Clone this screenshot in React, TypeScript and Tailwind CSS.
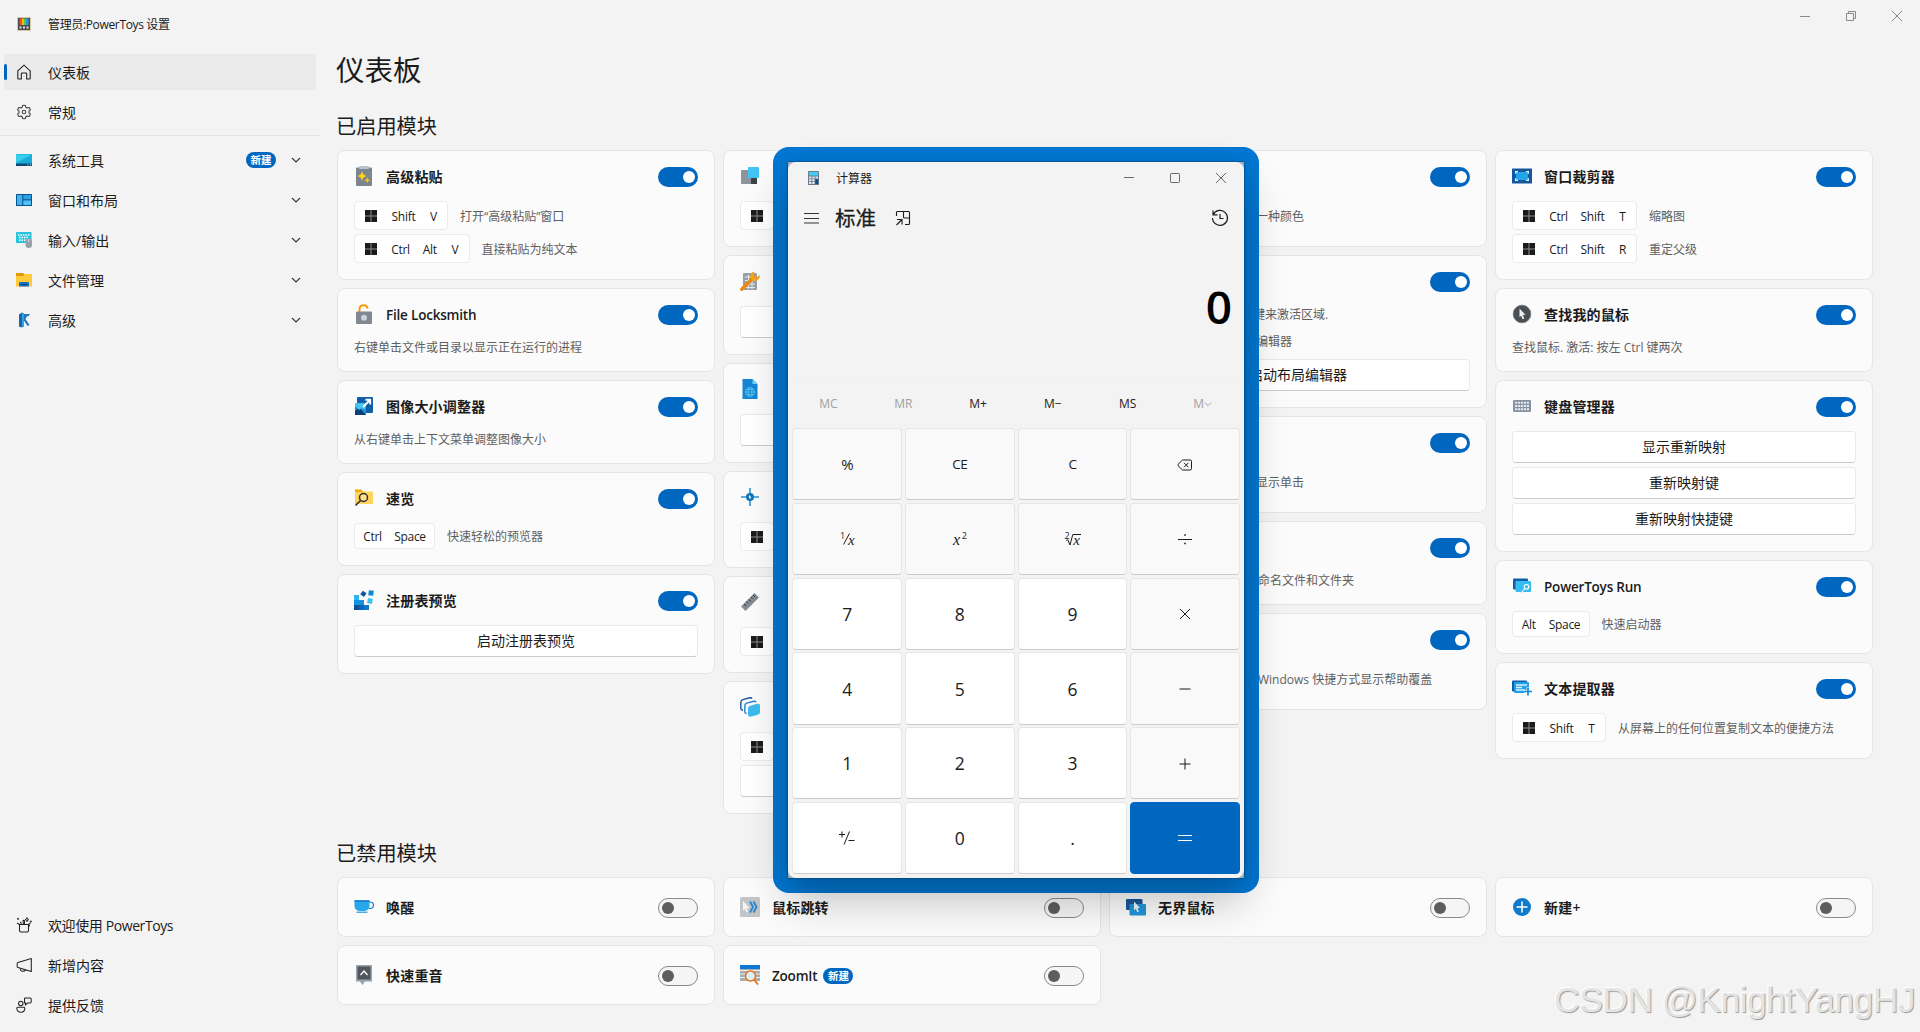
import React, { useState } from "react";

interface Shortcut {
  keys: string[];
  text?: string;
}

interface Module {
  id: string;
  title?: string;
  badge?: string;
  shortcuts?: Shortcut[];
  lines?: string[];
  lineClass?: string;
  buttons?: string[];
}

/* ---------- Module icons (20 x 20) ---------- */

const moduleIcons: Record<string, React.ReactNode> = {
  paste: (
    <>
      <rect x="2" y="1.5" width="16" height="18.5" rx="1" fill="#7d868e" />
      <rect x="5" y="0" width="10" height="3" rx="1" fill="#b9c4cf" />
      <path d="M8 5.5l1.4 3.1 3.1 1.4-3.1 1.4L8 14.5l-1.4-3.1L3.5 10l3.1-1.4z" fill="#ffd60a" />
      <path d="M13.3 11.5l.9 1.9 1.9.9-1.9.9-.9 1.9-.9-1.9-1.9-.9 1.9-.9z" fill="#ffc800" />
    </>
  ),
  lock: (
    <>
      <path d="M5.5 8V5.2C5.5 2.8 7 1.2 9.6 1.2c2.2 0 3.6 1.1 4 3.3" fill="none" stroke="#f79a0e" strokeWidth="2" />
      <rect x="2" y="7.5" width="16" height="12.5" rx="1" fill="#7f8890" />
      <circle cx="10" cy="13.8" r="3" fill="#c9d3de" />
    </>
  ),
  resize: (
    <>
      <rect x="3" y="1" width="16" height="16" rx="1" fill="#0f5ea8" />
      <rect x="1" y="8" width="11" height="11" rx="1" fill="#1f93dc" />
      <path d="M1 15l4-4 7 8H1z" fill="#0b3f78" />
      <path d="M1 10l4 4 3-2 2 2 2-3V9l-2-2H1z" fill="#45c4f0" />
      <path d="M9 11l7-7M11.500 3.800h4.700v4.700" fill="none" stroke="#fff" strokeWidth="1.9" />
    </>
  ),
  peek: (
    <>
      <path d="M1 2h6l1.500 1.500H18a1 1 0 011 1V16H1z" fill="#ffd35c" />
      <path d="M1 1.500h6.500L9 4H1z" fill="#f5a800" />
      <circle cx="9.500" cy="9.500" r="4" fill="#ffe08a" stroke="#2e2e2e" strokeWidth="1.500" />
      <path d="M6.800 12.200L1.500 17.500" stroke="#2e2e2e" strokeWidth="1.600" />
    </>
  ),
  registry: (
    <>
      <rect x="0" y="5" width="5" height="5" fill="#2bb5ee" />
      <rect x="0" y="10" width="5" height="5" fill="#1593dd" />
      <rect x="5" y="10" width="5" height="5" fill="#1c8edb" />
      <rect x="0" y="15" width="5" height="5" fill="#0f4f93" />
      <rect x="5" y="15" width="5" height="5" fill="#0a66b8" />
      <rect x="10" y="15" width="5" height="5" fill="#0f78cf" />
      <rect x="7.200" y="1.500" width="4.500" height="4.500" fill="#12549b" transform="rotate(35 9.400 3.700)" />
      <rect x="14.500" y="0.500" width="5" height="5" fill="#1488d6" transform="rotate(8 17 3)" />
      <rect x="13.500" y="8.500" width="5" height="5" fill="#3cc3f2" transform="rotate(12 16 11)" />
    </>
  ),
  top: (
    <>
      <rect x="1" y="4" width="16" height="14" rx="1" fill="#8c959d" />
      <rect x="11" y="12" width="6" height="6" fill="#3d4246" />
      <rect x="8" y="1" width="11" height="11" rx="1" fill="#41c4f3" />
    </>
  ),
  wrench: (
    <>
      <rect x="3" y="2" width="14" height="17" rx="1" fill="#98a1a9" />
      <path d="M5 6h10M5 9.500h10M5 13h10M5 16.500h10M8.500 4v14M12 4v14" stroke="#e6ebef" strokeWidth="1" />
      <path d="M1.800 18.200L14 6" stroke="#ee8a12" strokeWidth="3.400" strokeLinecap="round" />
      <path d="M14.500 .5a4.800 4.800 0 00-3.900 6.600l2.300 2.300A4.800 4.800 0 0019.700 4l-3 2.600-2.300-.7-.6-2.300z" fill="#f9a01b" />
    </>
  ),
  hosts: (
    <>
      <path d="M2.500 0h10l5 5v15h-15z" fill="#1585d4" />
      <path d="M12.500 0l5 5h-5z" fill="#6fd3f7" />
      <g fill="none" stroke="#4fc0f0" strokeWidth="1">
        <circle cx="10" cy="13" r="4.500" />
        <ellipse cx="10" cy="13" rx="2" ry="4.500" />
        <path d="M5.500 13h9M6.300 10.500h7.400M6.300 15.500h7.400" />
      </g>
    </>
  ),
  crosshair: (
    <>
      <path d="M10 1v5M10 14v5M1 10h5M14 10h5" stroke="#2a93d6" strokeWidth="1.600" />
      <circle cx="10" cy="10" r="4" fill="#1374bd" />
      <path d="M9 8l2.500 2.500-1.200.2.300 1.400-1.600-1z" fill="#fff" />
    </>
  ),
  ruler: (
    <>
      <path d="M14.500 1l4.500 4.500L5.500 19 1 14.500z" fill="#838c95" />
      <path d="M4 12l2 2M6.300 9.700l1.500 1.500M8.600 7.400l2 2M10.900 5.100l1.500 1.500M13 3l2 2" stroke="#2f3337" strokeWidth="1" />
    </>
  ),
  workspaces: (
    <>
      <path d="M3 13H2.500A1.800 1.800 0 01.8 11.200V5.500C.8 4 1.500 3 2.800 2.600l7-1.800c1-.2 1.800.1 2.200 1" fill="none" stroke="#15539a" strokeWidth="1.400" />
      <path d="M6.500 16.500A1.800 1.800 0 014.800 14.700V9c0-1.500.7-2.500 2-2.900l7-1.800c1-.2 1.800.1 2.200 1" fill="none" stroke="#1c83cf" strokeWidth="1.400" />
      <path d="M8 12c0-2 .6-2.800 2.300-3.300l7-1.900c1.700-.4 2.700.3 2.700 1.900v6c0 1.700-.6 2.500-2.200 3l-6.500 1.900C9.300 20.100 8 19.300 8 17.500z" fill="#3dbbee" />
    </>
  ),
  crop: (
    <>
      <rect x="0" y="2.500" width="20" height="15" rx=".6" fill="#14589f" />
      <rect x="4" y="6" width="12" height="8" fill="#20a6e8" />
      <path d="M3.600 7.800V5.600H6M14 5.600h2.400v2.200M16.400 12.200v2.200H14M6 14.400H3.600v-2.200" fill="none" stroke="#d8f2ff" strokeWidth="1.200" />
    </>
  ),
  findMouse: (
    <>
      <circle cx="10" cy="10" r="8.800" fill="#4a4f54" stroke="#777d83" strokeWidth="1" />
      <path d="M7.500 4.500l6 6.300-2.700.2 1.500 3.400-1.700.8-1.500-3.500-1.600 1.600z" fill="#e9edf0" />
    </>
  ),
  keyboard: (
    <>
      <rect x="1" y="4" width="18" height="12" rx="1" fill="#8793a1" />
      <path d="M3 6.800h14M3 10h14M3 13.200h14" stroke="#e3e8ee" strokeWidth="2" strokeDasharray="2.200 .8" />
    </>
  ),
  run: (
    <>
      <rect x="1" y="2.500" width="15" height="11" rx="1" fill="#0d5fae" />
      <rect x="3.500" y="5" width="15.500" height="11" rx="1" fill="#35bdf0" />
      <circle cx="14.500" cy="10.800" r="2.300" fill="#35bdf0" stroke="#fff" strokeWidth="1.200" />
      <path d="M12.800 12.500L9 17" stroke="#d2e4ee" strokeWidth="1.200" />
    </>
  ),
  ocr: (
    <>
      <rect x="0" y="2.500" width="15" height="11" rx="1" fill="#0d5fae" />
      <rect x="2" y="4" width="15" height="11" rx="1" fill="#22a0e6" />
      <path d="M4 7h11M4 9.500h6M4 12h9" stroke="#d9f2ff" strokeWidth="1.300" />
      <path d="M16 9.500v8M12.200 13.500H20" stroke="#fbfbfb" strokeWidth="3" />
      <path d="M16 10v7.500M12.200 13.500H20" stroke="#1289db" strokeWidth="1.700" />
    </>
  ),
  awake: (
    <>
      <path d="M15 5h1.200a2.200 2.200 0 010 6.500H14.500" fill="none" stroke="#1878c5" strokeWidth="1.200" />
      <path d="M.5 3.500h15v5.500a5 5 0 01-5 5h-5a5 5 0 01-5-5z" fill="#27a8ea" />
      <path d="M.5 4h15" stroke="#0f6fc0" strokeWidth="1.400" />
      <path d="M2.500 15.200h11" stroke="#2395dc" strokeWidth="1.200" />
    </>
  ),
  jump: (
    <>
      <rect x="0" y="0" width="20" height="20" rx="1.500" fill="#c3c4c6" />
      <path d="M3 4l6.500 7-3 .2 1.500 3.600-1.600.7-1.500-3.600L3 13.500z" fill="#f4f5f6" />
      <path d="M10 4.500l3 5.500-3 5.500M13.500 4.500l3 5.500-3 5.500" fill="none" stroke="#2a88cc" strokeWidth="1.900" />
    </>
  ),
  borders: (
    <>
      <rect x="0" y="2" width="16.500" height="11" rx="1" fill="#1a5796" />
      <rect x="3.500" y="7" width="16.500" height="11.500" rx="1" fill="#2196d8" />
      <path d="M8 4.500l6 6.500-2.700.2 1.600 3.300-1.600.7-1.500-3.400L8 13.500z" fill="#eaf5fb" />
    </>
  ),
  newPlus: (
    <>
      <circle cx="10" cy="10" r="9" fill="#0f7acb" />
      <path d="M10 4.500v11M4.500 10h11" stroke="#fff" strokeWidth="1.500" />
    </>
  ),
  accent: (
    <>
      <path d="M2 0h16v16.500h-7L8.500 20 6 16.500H2z" fill="#98a3ae" />
      <rect x="3.500" y="1.500" width="13" height="13" fill="#50565c" />
      <path d="M6.500 10L10 6l3.500 4" fill="none" stroke="#fff" strokeWidth="1.300" />
    </>
  ),
  zoomit: (
    <>
      <rect x="0" y="0" width="20" height="16" fill="#a9adb1" />
      <rect x="0" y="0" width="20" height="4" fill="#0a78d4" />
      <path d="M0 5.500h20M0 9h20M0 12.500h20" stroke="#eceef0" strokeWidth="1.200" />
      <circle cx="10.500" cy="11" r="5" fill="#d8f2fb" stroke="#e8741a" strokeWidth="1.500" />
      <path d="M14 14.500l4 5" stroke="#e8741a" strokeWidth="1.900" />
    </>
  ),
};

/* ---------- Sidebar icons (16 x 16) ---------- */

const navIcons: Record<string, React.ReactNode> = {
  home: <path d="M1.800 6.900L8 1.200l6.200 5.700v7.300a.8.8 0 01-.8.800h-2.700V9.800A.8.800 0 009.900 9H6.100a.8.800 0 00-.8.800V15H2.600a.8.800 0 01-.8-.8z" fill="none" stroke="#1b1b1b" strokeWidth="1.050" />,
  settings: (
    <g fill="none" stroke="#3c3c3c" strokeWidth="1.050" strokeLinejoin="round">
      <path d="M6.600 1.400a7 7 0 012.800 0l.4 1.900 1.300.75 1.900-.6a7 7 0 011.400 2.400L13 7.200v1.600l1.400 1.350a7 7 0 01-1.400 2.400l-1.900-.6-1.300.75-.4 1.900a7 7 0 01-2.800 0l-.4-1.900-1.300-.75-1.900.6a7 7 0 01-1.400-2.400L3 8.800V7.200L1.600 5.850A7 7 0 013 3.450l1.900.6 1.300-.75z" />
      <circle cx="8" cy="8" r="1.800" />
    </g>
  ),
  system: (
    <>
      <rect y="2" width="16" height="12" rx=".5" fill="#1cabd8" />
      <path d="M0 2.500h16L0 11z" fill="#35cdea" />
      <rect y="11.500" width="16" height="2.500" fill="#0c4a75" />
      <path d="M11.500 12.800h1M14 12.800h1" stroke="#bfe6f5" strokeWidth="1" />
    </>
  ),
  windows: (
    <>
      <rect y="2" width="16" height="12" rx=".5" fill="#0e4f8f" />
      <rect x="1" y="3" width="5.300" height="10" fill="#3bb4ee" />
      <rect x="7.300" y="3" width="7.700" height="4.300" fill="#2c9fe6" />
      <rect x="7.300" y="8.400" width="7.700" height="4.600" fill="#4ec2f5" />
    </>
  ),
  input: (
    <>
      <rect y="0" width="15.500" height="11" rx=".6" fill="#2bc4de" />
      <path d="M2 3h11.500M3 5.500h10M3 8.300h8" stroke="#fff" strokeWidth="1.400" strokeDasharray="1.500 1" />
      <rect x="9.500" y="6.500" width="6.500" height="9.500" rx="3.200" fill="#98a1ab" />
      <path d="M12.700 7v3" stroke="#dfe4e9" strokeWidth=".9" />
    </>
  ),
  files: (
    <>
      <path d="M0 2h16v12.500H0z" fill="#ffcb3d" />
      <path d="M0 1h7l1.500 1.500L7 4H0z" fill="#e29a00" />
      <path d="M3 14.500v-3.200c0-.8.500-1.300 1.300-1.300h7.400c.8 0 1.300.5 1.300 1.300v3.200z" fill="#1370c4" />
      <path d="M5 12.500h6" stroke="#0a3d78" strokeWidth="1.100" />
    </>
  ),
  advanced: (
    <>
      <path d="M3 2.500L6 .5l2 1v13L5.500 15.500 3 14.500z" fill="#1568b0" />
      <path d="M6 1l2 .5v13l-2 .8z" fill="#38a1e2" />
      <path d="M8 2h6l-1.500 2.200H11L9.500 7l4 6-1.800 1L8 8.800z" fill="#2079c4" />
    </>
  ),
  welcome: (
    <g fill="none" stroke="#222" strokeWidth="1.050">
      <path d="M3.500 7.500h9v6a1.500 1.500 0 01-1.500 1.500H5a1.500 1.500 0 01-1.500-1.500z" />
      <path d="M3.500 7.500L1 6M5.500 7.500L4.500 4.800M7.500 7.500L7 4c0-1 1.500-1 1.500 0v3.500M12.500 7.500l2-1.500" />
      <path d="M11 .500l.5 1.600 1.500.5-1.500.6L11 4.800l-.5-1.600L9 2.600l1.500-.5zM2 .8v2M1 1.800h2M14.800 3.500v2M13.800 4.500h2M13.500 8v1.500" strokeWidth=".9" />
    </g>
  ),
  news: (
    <path d="M15.300 1.500v13L2 10.500a1 1 0 01-.8-1V6.500a1 1 0 01.8-1zM4 11.200c.2 2 1.300 3 2.800 3s2.500-.7 2.800-1.500" fill="none" stroke="#222" strokeWidth="1.050" strokeLinejoin="round" />
  ),
  feedback: (
    <g fill="none" stroke="#222" strokeWidth="1.050">
      <circle cx="4.800" cy="6.500" r="2.200" />
      <path d="M.8 11.200c0-.6.400-1 1-1h6c.6 0 1 .4 1 1 0 2.500-1.500 4-4 4s-4-1.500-4-4z" />
      <path d="M8.500 1h5.500a1.200 1.200 0 011.200 1.200v2.600A1.200 1.200 0 0114 6h-2.500L9.500 7.800V6H8.500V1" />
    </g>
  ),
};

const Chevron = () => (
  <svg width="10" height="10" viewBox="0 0 10 10" className="shrink-0">
    <path d="M1 3l4 4 4-4" fill="none" stroke="#333" strokeWidth="1.100" />
  </svg>
);

const NewBadge = ({ text }: { text: string }) => (
  <span className="flex h-4 w-[30px] items-center justify-center rounded-full bg-[#0067c0] pt-px text-[10.5px] leading-none font-semibold text-white">
    {text}
  </span>
);

const hasLatin = (text = "") => /[A-Za-z]/.test(text);

function NavItem({ icon, label, badge, expandable, active }: { icon: string; label: string; badge?: string; expandable?: boolean; active?: boolean }) {
  return (
    <button className={`relative mx-1 flex h-9 w-[312px] items-center rounded pl-3 text-left ${active ? "bg-[#eaeaea]" : ""}`}>
      {active && <span className="absolute top-[10px] left-0 h-4 w-[3px] rounded-full bg-[#0067c0]" />}
      <svg width="16" height="16" viewBox="0 0 16 16" className="shrink-0">
        {navIcons[icon]}
      </svg>
      <span className={`ml-4 flex-1 pt-px text-sm leading-5 ${hasLatin(label) ? "tracking-[-0.4px]" : ""}`}>{label}</span>
      {badge && <NewBadge text={badge} />}
      {expandable && (
        <span className="mr-[15px] ml-[15px]">
          <Chevron />
        </span>
      )}
    </button>
  );
}

const WinKey = () => (
  <span className="flex w-4 justify-center">
    <svg width="12" height="12" viewBox="0 0 12 12">
      <rect width="12" height="12" fill="#8d8d8d" />
      <path d="M0 0h5.500v5.500H0zM6.500 0H12v5.500H6.500zM0 6.500h5.500V12H0zM6.500 6.500H12V12H6.500z" fill="#1b1b1b" />
    </svg>
  </span>
);

const keyWidths: Record<string, string> = {
  Shift: "w-[25px]",
  Ctrl: "w-[19px]",
  Alt: "w-[15.5px]",
  Space: "w-[32px]",
};

function ShortcutRow({ keys, text }: Shortcut) {
  const hasWin = keys.includes("Win");
  return (
    <div className="flex items-center gap-3">
      <div className={`flex shrink-0 items-center gap-3 rounded border border-[#ebebeb] bg-white px-2 ${hasWin ? "h-[29px]" : "h-[26px]"}`}>
        {keys.map((key) =>
          key === "Win" ? (
            <WinKey key={key} />
          ) : (
            <span key={key} className={`flex justify-center pt-0.5 text-xs leading-4 tracking-[-0.3px] whitespace-nowrap ${keyWidths[key] ?? "w-[11px]"}`}>
              {key}
            </span>
          )
        )}
      </div>
      {text && <span className="pt-0.5 text-xs leading-4 whitespace-nowrap text-[#5f5f5f]">{text}</span>}
    </div>
  );
}

function Toggle({ on, onClick }: { on: boolean; onClick: () => void }) {
  return (
    <button
      onClick={onClick}
      className={`flex h-5 w-10 shrink-0 items-center rounded-full ${
        on ? "justify-end bg-[#0067c0] pr-[3px]" : "justify-start border border-[#8a8a8a] bg-[#f5f5f5] pl-[3px]"
      }`}
    >
      <span className={`h-3 w-3 rounded-full ${on ? "bg-white" : "bg-[#5d5d5d]"}`} />
    </button>
  );
}

function CardHeader({ module, enabled }: { module: Module; enabled: boolean }) {
  const [on, setOn] = useState(enabled);
  return (
    <div className="flex h-5 items-center">
      <svg width="20" height="20" viewBox="0 0 20 20" className="-mt-0.5 shrink-0">
        {moduleIcons[module.id]}
      </svg>
      <span
        className={`ml-3 leading-5 font-semibold whitespace-nowrap ${
          hasLatin(module.title) ? "text-[13.5px] tracking-[-0.2px]" : "text-sm tracking-[0.2px]"
        }`}
      >
        {module.title}
      </span>
      {module.badge && (
        <span className="ml-1.5">
          <NewBadge text={module.badge} />
        </span>
      )}
      <span className="ml-auto">
        <Toggle on={on} onClick={() => setOn(!on)} />
      </span>
    </div>
  );
}

function ModuleCard({ module }: { module: Module }) {
  return (
    <div className="rounded-lg border border-[#e5e5e5] bg-[#fbfbfb] p-4">
      <CardHeader module={module} enabled />
      <div className="mt-[14px] flex flex-col gap-1">
        {module.shortcuts?.map((s) => (
          <ShortcutRow key={s.keys.join()} keys={s.keys} text={s.text} />
        ))}
        {module.lines && (
          <div className={module.lineClass}>
            {module.lines.map((line) => (
              <p key={line} className="pt-px text-xs leading-[15px] whitespace-nowrap text-[#5f5f5f]">
                {line}
              </p>
            ))}
          </div>
        )}
        {module.buttons?.map((label, idx) => (
          <button key={idx} className="h-8 rounded border border-[#e9e9e9] border-b-[#cccccc] bg-white text-sm leading-5">
            {label}
          </button>
        ))}
      </div>
    </div>
  );
}

const columns: Module[][] = [
  [
    {
      id: "paste",
      title: "高级粘贴",
      shortcuts: [
        { keys: ["Win", "Shift", "V"], text: "打开“高级粘贴”窗口" },
        { keys: ["Win", "Ctrl", "Alt", "V"], text: "直接粘贴为纯文本" },
      ],
    },
    { id: "lock", title: "File Locksmith", lines: ["右键单击文件或目录以显示正在运行的进程"] },
    { id: "resize", title: "图像大小调整器", lines: ["从右键单击上下文菜单调整图像大小"] },
    { id: "peek", title: "速览", shortcuts: [{ keys: ["Ctrl", "Space"], text: "快速轻松的预览器" }] },
    { id: "registry", title: "注册表预览", buttons: ["启动注册表预览"] },
  ],
  [
    { id: "top", shortcuts: [{ keys: ["Win"] }] },
    { id: "wrench", buttons: [""] },
    { id: "hosts", buttons: [""] },
    { id: "crosshair", shortcuts: [{ keys: ["Win"] }] },
    { id: "ruler", shortcuts: [{ keys: ["Win"] }] },
    { id: "workspaces", shortcuts: [{ keys: ["Win"] }], buttons: [""] },
  ],
  [
    { id: "picker", lines: ["一种颜色"], lineClass: "h-[29px] pt-[7px] pl-[130px]" },
    {
      id: "zones",
      lines: ["键来激活区域.", "编辑器"],
      lineClass: "flex h-[49px] flex-col gap-[11px] pl-[127px] [&>p:last-child]:pl-[3px]",
      buttons: ["启动布局编辑器"],
    },
    { id: "highlighter", lines: ["显示单击"], lineClass: "h-[29px] pt-[7px] pl-[130px]" },
    { id: "rename", lines: ["命名文件和文件夹"], lineClass: "pl-[132px]" },
    { id: "guide", lines: ["Windows 快捷方式显示帮助覆盖"], lineClass: "h-[29px] pt-[7px] pl-[132px]" },
  ],
  [
    {
      id: "crop",
      title: "窗口裁剪器",
      shortcuts: [
        { keys: ["Win", "Ctrl", "Shift", "T"], text: "缩略图" },
        { keys: ["Win", "Ctrl", "Shift", "R"], text: "重定父级" },
      ],
    },
    { id: "findMouse", title: "查找我的鼠标", lines: ["查找鼠标. 激活: 按左 Ctrl 键两次"] },
    { id: "keyboard", title: "键盘管理器", buttons: ["显示重新映射", "重新映射键", "重新映射快捷键"] },
    { id: "run", title: "PowerToys Run", shortcuts: [{ keys: ["Alt", "Space"], text: "快速启动器" }] },
    { id: "ocr", title: "文本提取器", shortcuts: [{ keys: ["Win", "Shift", "T"], text: "从屏幕上的任何位置复制文本的便捷方法" }] },
  ],
];

const disabledModules: Module[] = [
  { id: "awake", title: "唤醒" },
  { id: "jump", title: "鼠标跳转" },
  { id: "borders", title: "无界鼠标" },
  { id: "newPlus", title: "新建+" },
  { id: "accent", title: "快速重音" },
  { id: "zoomit", title: "ZoomIt", badge: "新建" },
];

/* ---------- Calculator ---------- */

const glyphStroke = { fill: "none", stroke: "#1b1b1b", strokeWidth: 1 };

const calcGlyphs: Record<string, React.ReactNode> = {
  "%": <span className="text-[15px]">%</span>,
  back: (
    <svg width="16" height="12" viewBox="0 0 16 12" {...glyphStroke}>
      <path d="M5.500 1h7.700A1.300 1.300 0 0114.500 2.300v7.400a1.300 1.300 0 01-1.300 1.300H5.500L1 6.600V5.400zM7 3.800l4.500 4.500M11.500 3.800L7 8.300" />
    </svg>
  ),
  inverse: (
    <span className="flex items-center leading-none">
      <span className="-mt-2 text-[9px]">1</span>
      <svg width="7" height="12" viewBox="0 0 7 12" className="-mx-[1.5px]" {...glyphStroke}>
        <path d="M.5 11.500L6.500 .5" />
      </svg>
      <span className="mt-0.5 -ml-px font-['Liberation_Serif',serif] text-[15px] italic">x</span>
    </span>
  ),
  square: (
    <span className="flex items-center leading-none">
      <span className="mt-0.5 font-['Liberation_Serif',serif] text-base italic">x</span>
      <span className="-mt-2 ml-0.5 text-[9px]">2</span>
    </span>
  ),
  root: (
    <span className="flex items-center leading-none">
      <span className="-mt-2 text-[9px]">2</span>
      <svg width="7" height="13" viewBox="0 0 7 13" className="-ml-[3px]" {...glyphStroke}>
        <path d="M.3 7.500l1.500-.8L4 12 6.800 1.500" />
      </svg>
      <span className="mt-px border-t border-[#1b1b1b] pr-px font-['Liberation_Serif',serif] text-[15px] leading-[10px] italic">x</span>
    </span>
  ),
  divide: (
    <svg width="14" height="12" viewBox="0 0 14 12" {...glyphStroke}>
      <path d="M0 6.500h14" />
      <path d="M6.200 2h1.600M6.200 10.500h1.600" strokeWidth="1.600" />
    </svg>
  ),
  times: (
    <svg width="12" height="12" viewBox="0 0 12 12" {...glyphStroke}>
      <path d="M1 1l10 10M11 1L1 11" />
    </svg>
  ),
  minus: (
    <svg width="12" height="12" viewBox="0 0 12 12" {...glyphStroke}>
      <path d="M.5 6h11" />
    </svg>
  ),
  plus: (
    <svg width="12" height="12" viewBox="0 0 12 12" {...glyphStroke}>
      <path d="M.5 6h11M6 .5v11" />
    </svg>
  ),
  sign: (
    <svg width="16" height="14" viewBox="0 0 16 14" {...glyphStroke}>
      <path d="M0 3.500h6M3 .5v6M5 13.500L10.500 0.500M9.500 9.500h6" />
    </svg>
  ),
  equals: (
    <svg width="14" height="12" viewBox="0 0 14 12" fill="none" stroke="#fff" strokeWidth="1.200">
      <path d="M0 3.500h14M0 8.500h14" />
    </svg>
  ),
};

const calcKeys = [
  "%", "CE", "C", "back",
  "inverse", "square", "root", "divide",
  "7", "8", "9", "times",
  "4", "5", "6", "minus",
  "1", "2", "3", "plus",
  "sign", "0", ".", "equals",
];

function calcKeyClass(key: string) {
  if (key === "equals") return "border-[#0067c0] bg-[#0067c0]";
  if (/^[0-9.]$/.test(key)) return "border-[#e6e6e6] border-b-[#cbcbcb] bg-white pt-0.5 text-[17.5px]";
  if (key === "sign") return "border-[#e6e6e6] border-b-[#cbcbcb] bg-white";
  return "border-[#e6e6e6] border-b-[#cbcbcb] bg-[#f9f9f9] pt-px text-[13.5px] tracking-[-0.3px]";
}

function Calculator() {
  const memory = ["MC", "MR", "M+", "M−", "MS", "M"];
  return (
    <div className="absolute top-[147px] left-[773px] rounded-2xl bg-[#0078d4] p-[15px]">
      <div className="h-[716px] w-[456px] bg-[#9fa9b1] shadow-[0_22px_40px_rgba(0,0,0,0.24),0_0_24px_rgba(0,0,0,0.07),0_0_2px_rgba(0,0,0,0.5)]">
        <div className="flex h-full flex-col rounded-lg bg-[#f3f3f3] px-1">
          {/* Title bar */}
          <div className="flex h-8 items-center pl-4">
            <svg width="11" height="14" viewBox="0 0 11 14">
              <rect width="11" height="14" rx=".6" fill="#6b7b8b" />
              <rect x="1" y="1" width="9" height="3.500" fill="#3fd0f5" />
              <path d="M1 5.500h2.400v2H1zM4.200 5.500h2.400v2H4.200zM7.500 5.500H10v2H7.500zM1 8.300h2.400v2H1zM4.200 8.300h2.400v2H4.200zM1 11h2.400v2H1zM4.200 11h2.400v2H4.200z" fill="#dce5ec" />
              <rect x="7.300" y="8.300" width="2.800" height="4.700" fill="#104a8a" />
            </svg>
            <span className="ml-[17px] flex-1 pt-px text-xs leading-4">计算器</span>
            <svg width="104" height="12" viewBox="0 0 104 12" fill="none" stroke="#6a6a6a" className="mr-[13px]">
              <path d="M1 5.500h10" />
              <rect x="47.500" y="1.500" width="9" height="9" rx=".8" />
              <path d="M93 1l10 10M103 1L93 11" />
            </svg>
          </div>

          {/* Mode row */}
          <div className="flex h-12 items-center pl-3">
            <svg width="15" height="12" viewBox="0 0 15 12" stroke="#333">
              <path d="M0 1.500h15M0 6.500h15M0 11h15" />
            </svg>
            <span className="-mt-px ml-4 text-[20.5px] leading-7 [-webkit-text-stroke:0.3px_#1b1b1b]">标准</span>
            <svg width="16" height="16" viewBox="0 0 16 16" className="ml-[19px]" {...glyphStroke} strokeWidth="1.100">
              <path d="M1.500 6V2.500a1 1 0 011-1h11a1 1 0 011 1v11a1 1 0 01-1 1H10M8.500 1.500V7a1 1 0 001 1h5M1.500 15l5-5M2 9.500h5v5" />
            </svg>
            <svg width="18" height="18" viewBox="0 0 18 18" className="mr-[11px] ml-auto" {...glyphStroke} strokeWidth="1.200">
              <path d="M2.300 5.500A7.500 7.500 0 111.500 9M2 1.500v4.300h4.500M9 5v4.500h3.500" />
            </svg>
          </div>

          {/* Display */}
          <div className="flex h-[136px] items-center justify-end border-b border-[#f0f0f0] pr-[8px] pb-2">
            <span className="text-[46px] leading-none font-semibold text-black">0</span>
          </div>

          {/* Memory row */}
          <div className="-ml-px flex h-[50px] items-center pt-0.5">
            {memory.map((m, i) => (
              <span
                key={m}
                className={`flex w-[75px] items-center justify-center text-xs leading-4 ${i < 2 || i === 5 ? "text-[#a0a0a0]" : "text-[#1b1b1b]"}`}
              >
                {m}
                {m === "M" && (
                  <svg width="8" height="8" viewBox="0 0 8 8" fill="none" stroke="#a0a0a0">
                    <path d="M.8 2.500L4 5.700l3.200-3.200" />
                  </svg>
                )}
              </span>
            ))}
          </div>

          {/* Keypad */}
          <div className="ml-[0.4px] grid h-[446px] grid-cols-4 grid-rows-6 gap-x-[3px] gap-y-[2.5px]">
            {calcKeys.map((key) => (
              <button key={key} className={`flex min-h-0 items-center justify-center rounded border leading-none ${calcKeyClass(key)}`}>
                {calcGlyphs[key] ?? key}
              </button>
            ))}
          </div>
        </div>
      </div>
    </div>
  );
}

export default function App() {
  return (
    <div className="relative flex h-[1032px] w-[1920px] overflow-hidden bg-[#f3f3f3] font-['Open_Sans','Noto_Sans_CJK_SC',sans-serif] text-[#1b1b1b]">
      {/* Sidebar */}
      <aside className="flex w-80 shrink-0 flex-col pb-[9px]">
        <div className="flex h-[50px] items-center pl-[17px]">
          <svg width="14" height="14" viewBox="0 0 14 14" className="-mt-0.5">
            <rect width="14" height="14" fill="#d9c9a8" />
            <rect x="1" y="1" width="12" height="12" fill="#4d4d4f" />
            <path d="M2.500 1.500H5V8H3.500a1 1 0 01-1-1z" fill="#f25022" />
            <path d="M5 1.500h2V8H5z" fill="#ffb900" />
            <path d="M7 1.500h2V8H7z" fill="#5fc34a" />
            <path d="M9 1.500h2.500V7a1 1 0 01-1 1H9z" fill="#1e9be8" />
            <path d="M2.500 10.500h2M6 10.500h2M9.500 10.500h2" stroke="#d8d8d8" strokeWidth="2" />
          </svg>
          <span className="ml-[17px] text-xs leading-4 tracking-[-0.35px]">管理员:PowerToys 设置</span>
        </div>
        <nav className="mt-1 flex flex-col gap-1">
          <NavItem icon="home" label="仪表板" active />
          <NavItem icon="settings" label="常规" />
        </nav>
        <div className="mt-[5px] mb-[6px] h-px bg-[#e3e3e3]" />
        <nav className="flex flex-1 flex-col gap-1">
          <NavItem icon="system" label="系统工具" badge="新建" expandable />
          <NavItem icon="windows" label="窗口和布局" expandable />
          <NavItem icon="input" label="输入/输出" expandable />
          <NavItem icon="files" label="文件管理" expandable />
          <NavItem icon="advanced" label="高级" expandable />
        </nav>
        <nav className="flex flex-col gap-1">
          <NavItem icon="welcome" label="欢迎使用 PowerToys" />
          <NavItem icon="news" label="新增内容" />
          <NavItem icon="feedback" label="提供反馈" />
        </nav>
      </aside>

      {/* Dashboard */}
      <main className="flex flex-1 flex-col pr-[47px] pl-[17px]">
        <div className="-mr-[47px] flex h-[52px] justify-end pt-[10px] pr-[17px]">
          <svg width="104" height="12" viewBox="0 0 104 12" fill="none" stroke="#8a8a8a">
            <path d="M1 6.500h10" />
            <path d="M47.500 3.500h7v7h-7zM49.500 3.500v-2h7v7h-2" />
            <path d="M93 1l10 10M103 1L93 11" />
          </svg>
        </div>
        <h1 className="-ml-px h-9 text-[28.5px] leading-9">仪表板</h1>
        <h2 className="mt-6 -ml-px h-7 text-[20.2px] leading-7">已启用模块</h2>
        <div className="mt-[10px] grid h-[664px] grid-cols-4 gap-2">
          {columns.map((column, idx) => (
            <div key={idx} className="flex flex-col gap-2">
              {column.map((module) => (
                <ModuleCard key={module.id} module={module} />
              ))}
            </div>
          ))}
        </div>
        <h2 className="mt-[25px] -ml-px h-7 text-[20.2px] leading-7">已禁用模块</h2>
        <div className="mt-[10px] grid grid-cols-4 gap-2">
          {disabledModules.map((module) => (
            <div key={module.id} className="h-[60px] rounded-lg border border-[#e5e5e5] bg-[#fbfbfb] px-4 pt-5">
              <CardHeader module={module} enabled={false} />
            </div>
          ))}
        </div>
      </main>

      <Calculator />

      <span className="absolute right-[5px] bottom-[10px] font-['Liberation_Sans',sans-serif] text-[35.5px] leading-[44px] tracking-[-0.55px] whitespace-nowrap text-[#e4e4e4] [text-shadow:1px_1px_1px_#9a9a9a,-1px_-1px_1px_#ffffff]">
        CSDN @KnightYangHJ
      </span>
    </div>
  );
}
